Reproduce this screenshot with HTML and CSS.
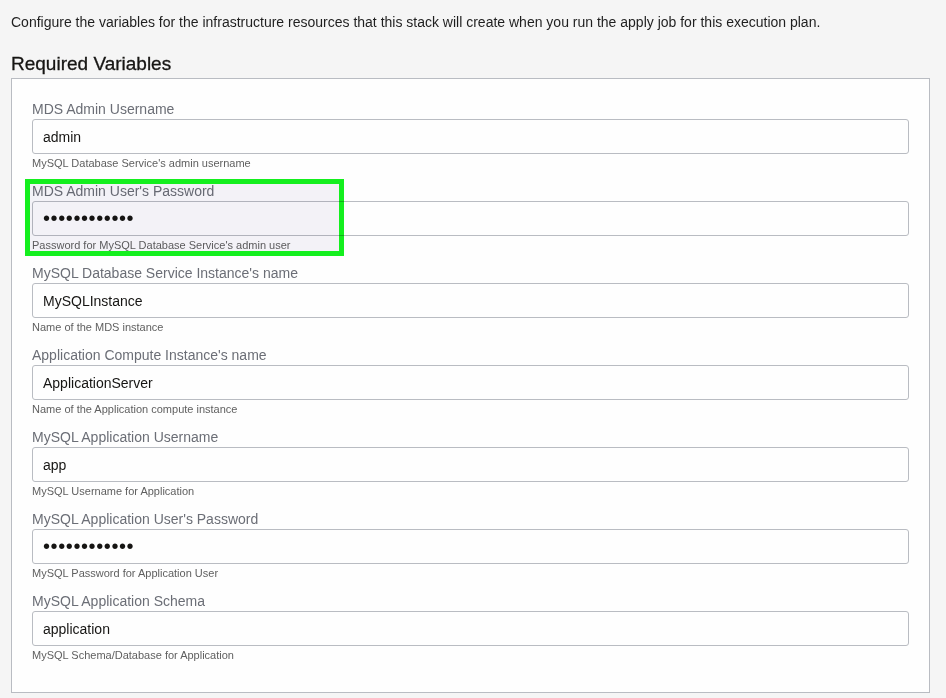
FILE: index.html
```html
<!DOCTYPE html>
<html lang="en">
<head>
<meta charset="utf-8">
<title>Required Variables</title>
<link rel="stylesheet" href="styles.css">
</head>
<body>
<p class="intro">Configure the variables for the infrastructure resources that this stack will create when you run the apply job for this execution plan.</p>
<h2 class="section-title">Required Variables</h2>
<div class="panel">
  <div class="field">
    <label class="field-label">MDS Admin Username</label>
    <input class="field-input" type="text" value="admin">
    <div class="field-help">MySQL Database Service's admin username</div>
  </div>
  <div class="field highlighted">
    <label class="field-label">MDS Admin User's Password</label>
    <input class="field-input" type="password" value="123456789012">
    <div class="field-help">Password for MySQL Database Service's admin user</div>
    <div class="highlight-box"></div>
  </div>
  <div class="field">
    <label class="field-label">MySQL Database Service Instance's name</label>
    <input class="field-input" type="text" value="MySQLInstance">
    <div class="field-help">Name of the MDS instance</div>
  </div>
  <div class="field">
    <label class="field-label">Application Compute Instance's name</label>
    <input class="field-input" type="text" value="ApplicationServer">
    <div class="field-help">Name of the Application compute instance</div>
  </div>
  <div class="field">
    <label class="field-label">MySQL Application Username</label>
    <input class="field-input" type="text" value="app">
    <div class="field-help">MySQL Username for Application</div>
  </div>
  <div class="field">
    <label class="field-label">MySQL Application User's Password</label>
    <input class="field-input" type="password" value="123456789012">
    <div class="field-help">MySQL Password for Application User</div>
  </div>
  <div class="field">
    <label class="field-label">MySQL Application Schema</label>
    <input class="field-input" type="text" value="application">
    <div class="field-help">MySQL Schema/Database for Application</div>
  </div>
</div>
</body>
</html>
```
FILE: styles.css
```css
html, body {
  margin: 0;
  padding: 0;
  background: #f5f5f5;
  font-family: "Liberation Sans", Arial, sans-serif;
  color: #1f1f1f;
}
body {
  padding: 0 16px 0 11px;
}
.intro {
  margin: 0;
  padding-top: 13px;
  font-size: 14px;
  line-height: 18px;
  color: #1f1f1f;
}
.section-title {
  margin: 21px 0 0;
  font-size: 19px;
  line-height: 24px;
  font-weight: normal;
  color: #161513;
  -webkit-text-stroke: 0.3px #161513;
}
.panel {
  margin-top: 2px;
  background: #fefefe;
  border: 1px solid #b9bcc2;
  padding: 19px 20px 30px;
  display: flex;
  flex-direction: column;
  gap: 10px;
}
.field {
  display: flex;
  flex-direction: column;
  position: relative;
}
.field-label {
  font-size: 14px;
  line-height: 20px;
  padding-top: 1px;
  height: 20px;
  box-sizing: border-box;
  color: #6b6e76;
  margin-bottom: 1px;
}
.field-input {
  box-sizing: border-box;
  height: 35px;
  width: 100%;
  margin: 0;
  border: 1px solid #b9bcc2;
  border-radius: 3px;
  background: #fefefe;
  padding: 0 10px;
  font-family: "Liberation Sans", Arial, sans-serif;
  font-size: 14px;
  color: #161513;
  outline: none;
}
.field-input[type="password"] {
  font-size: 20px;
  letter-spacing: 0.6px;
  color: #161513;
}
.field-help {
  margin-top: 2px;
  font-size: 11px;
  line-height: 14px;
  color: #5f5f5f;
}
.highlight-box {
  position: absolute;
  left: -7px;
  top: -1px;
  width: 319px;
  height: 77px;
  box-sizing: border-box;
  border: 5px solid #14f01e;
  background: #f4f3f8;
  mix-blend-mode: multiply;
  pointer-events: none;
}
```
